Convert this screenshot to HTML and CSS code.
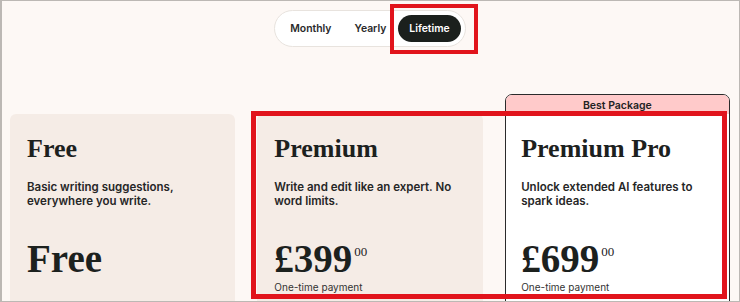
FILE: index.html
```html
<!DOCTYPE html>
<html lang="en">
<head>
    <meta charset="UTF-8">
    <meta name="viewport" content="width=device-width, initial-scale=1.0">
    <title>Pricing</title>
    <link rel="stylesheet" href="styles.css">
</head>
<body>
    <div class="page">
        <div class="toggle-wrap">
            <div class="toggle">
                <button class="tab">Monthly</button>
                <button class="tab">Yearly</button>
                <button class="tab tab-active">Lifetime</button>
            </div>
        </div>

        <div class="plans">
            <div class="plan">
                <h2>Free</h2>
                <p class="plan-desc">Basic writing suggestions, everywhere you write.</p>
                <div class="price">Free</div>
            </div>

            <div class="plan">
                <h2>Premium</h2>
                <p class="plan-desc">Write and edit like an expert. No word limits.</p>
                <div class="price">£399<span class="cents">00</span></div>
                <div class="price-note">One-time payment</div>
            </div>

            <div class="plan plan-best">
                <div class="plan-badge">Best Package</div>
                <div class="plan-body">
                    <h2>Premium Pro</h2>
                    <p class="plan-desc">Unlock extended AI features to spark ideas.</p>
                    <div class="price">£699<span class="cents">00</span></div>
                    <div class="price-note">One-time payment</div>
                </div>
            </div>
        </div>

        <div class="mark mark-toggle"></div>
        <div class="mark mark-plans"></div>
    </div>
</body>
</html>
```

FILE: styles.css
```css
body {
    margin: 0;
    background-color: #fdf8f5;
    font-family: Inter, "Liberation Sans", sans-serif;
    color: #1c211e;
}

.page {
    position: relative;
    height: 302px;
    padding: 10px 10px 0;
    box-sizing: border-box;
    overflow: hidden;
}

.page::after {
    content: "";
    position: absolute;
    top: 0;
    left: 0;
    right: 0;
    bottom: 0;
    border: 1px solid #bcb8b4;
    border-left-width: 2px;
    pointer-events: none;
}

.toggle-wrap {
    display: flex;
    justify-content: center;
}

.toggle {
    display: flex;
    gap: 1px;
    padding: 4px;
    background: #fff;
    border: 1px solid #e8e3de;
    border-radius: 999px;
}

.tab {
    height: 27px;
    padding: 0 11px;
    border: none;
    border-radius: 999px;
    background: none;
    font-family: Inter, "Liberation Sans", sans-serif;
    font-size: 10.4px;
    font-weight: 600;
    color: #2a2a2a;
}

.tab-active {
    background: #1b201d;
    color: #fff;
}

.plans {
    display: grid;
    grid-template-columns: repeat(3, 1fr);
    gap: 22px;
    margin-top: 67px;
    align-items: start;
}

.plan {
    min-height: 240px;
    padding: 20px 17px;
    background: #f5ece6;
    border-radius: 6px;
}

.plan-best {
    margin-top: -20px;
    padding: 0;
    background: #fff;
    border: 1.5px solid #2b2b2b;
    border-radius: 7px;
    overflow: hidden;
}

.plan-badge {
    height: 16.5px;
    padding-top: 2px;
    line-height: 17px;
    background: #ffcaca;
    text-align: center;
    font-size: 10.5px;
    font-weight: 600;
    color: #222;
}

.plan-body {
    padding: 20px 15.5px;
}

h2 {
    margin: 0;
    font-family: "Liberation Serif", serif;
    font-size: 26px;
    line-height: 30px;
    font-weight: 700;
}

.plan-desc {
    margin: 16px 0 0;
    font-size: 11.5px;
    line-height: 14px;
    font-weight: 600;
    color: #262626;
}

.price {
    margin-top: 33px;
    font-family: "Liberation Serif", serif;
    font-size: 39px;
    line-height: 36px;
    font-weight: 700;
}

.cents {
    margin-left: 2px;
    font-size: 13px;
    line-height: 1;
    font-weight: 400;
    vertical-align: 16px;
}

.price-note {
    margin-top: 4px;
    font-size: 10px;
    line-height: 12px;
    color: #333;
}

.mark {
    position: absolute;
    box-sizing: border-box;
    border: 4px solid #e1141c;
    pointer-events: none;
}

.mark-toggle {
    left: 390px;
    top: 4px;
    width: 88px;
    height: 50px;
}

.mark-plans {
    left: 251px;
    top: 111px;
    width: 476px;
    height: 188px;
    border-width: 5px;
}
```
